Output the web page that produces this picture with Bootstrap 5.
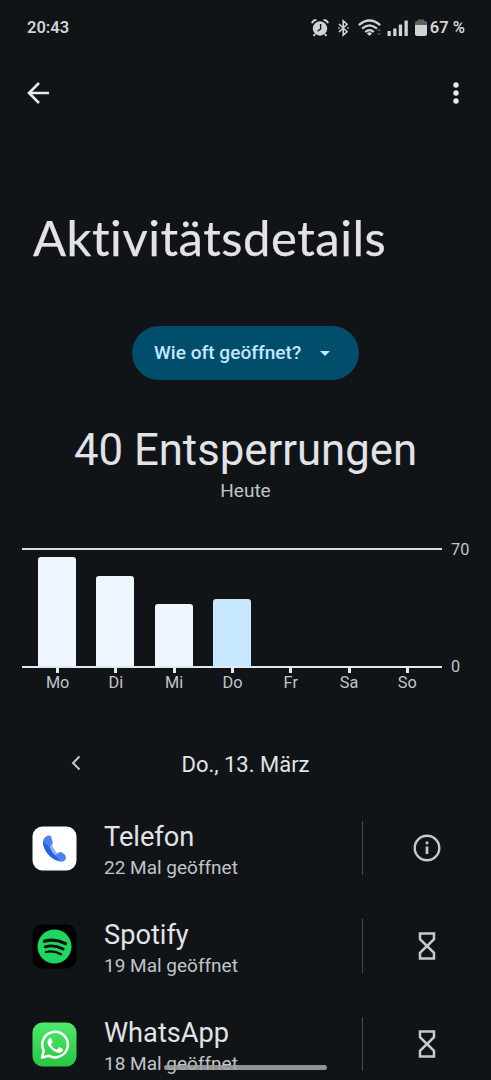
<!DOCTYPE html>
<html lang="de" data-bs-theme="dark">
<head>
<meta charset="utf-8">
<meta name="viewport" content="width=device-width, initial-scale=1">
<title>Aktivitätsdetails</title>
<link href="https://cdn.jsdelivr.net/npm/bootstrap@5.3.0/dist/css/bootstrap.min.css" rel="stylesheet">
<style>
html,body{height:1080px;overflow:hidden}
body{background:#101416;color:#e1e3e8;font-family:Roboto,"Liberation Sans",sans-serif}
svg{display:block;flex:none}
.status{height:55px;padding:1px 26px 0 27px;font-size:16.5px;font-weight:600;color:#d0d3d5}
.toolbar{height:76px;padding:0 22px 0 22px}
.icon-btn{width:32px;height:32px;padding:0;border:0;display:grid;place-items:center}
.page-title{font-family:Lato,Roboto,sans-serif;font-size:49px;line-height:60px;padding:76px 0 0 33px;margin:0;height:195px;font-weight:400;color:#e1e3e8;white-space:nowrap;font-variant-ligatures:none;-webkit-text-stroke:.25px #e1e3e8;letter-spacing:.53px}
.pill{width:227px;height:54px;padding:1px 29px 0 22px;background:#004d6c!important;color:#c3e8ff!important;border:0;font-size:19.1px;font-weight:500}
.pill::after{display:none!important}
.total{font-size:43.7px;line-height:52px;margin:44px 0 0;font-weight:400;white-space:nowrap;color:#e1e3e8}
.muted{color:#c1c5ca}
.today{font-size:19px;line-height:24px;margin-top:3px}
.chart{margin:45px 0 0 22px;height:150px}
.plot{width:420px}
.bars{height:120px;border-top:2px solid #d8dcde;border-bottom:2px solid #e4e8ea;padding:0 6px}
.bars>div,.days>div{flex:1 1 0}
.bar{width:38px;border-radius:3px 3px 0 0;background:#eef6ff}
.bar.today-bar{background:#c6e7ff}
.days{padding:0 5.5px 0 6.5px;font-size:16.3px;line-height:19px}
.tick{width:3px;height:5px;background:#e4e8ea;margin:0 auto}
.scale{padding-left:9px;height:120px;font-size:16.3px;line-height:16px}
.scale span:first-child{margin-top:-6px}
.scale span:last-child{margin-bottom:-7px}
.date-row{height:50px;margin-top:41px;font-size:22px}
.date-row .icon-btn{left:60px;top:8px}
.app{height:98.2px;padding-left:32px}
.apps{margin-top:10px}
.app-text{margin-left:27px;width:258px;padding-top:5px}
.app-name{font-size:27.2px;line-height:32px;white-space:nowrap}
.app-count{font-size:19px;line-height:24px;margin-top:3px}
.divider{width:1px;height:54px;background:#454a4e;margin-right:48px}
.handle{left:164px;top:1065px;width:163px;height:5px;background:#a3a3a3;opacity:.88}
</style>
</head>
<body>
<header class="status d-flex align-items-center justify-content-between">
  <span>20:43</span>
  <div class="d-flex align-items-center">
    <svg width="18" height="20" viewBox="0 0 18 20" fill="none" stroke="#d0d3d5"><circle cx="9" cy="10.5" r="7.2" fill="#d0d3d5" stroke="none"/><path d="M1 5.2Q2 2 5.4 2M17 5.2Q16 2 12.6 2M4 16l-1.4 2M14 16l1.4 2" stroke-width="2"/><path d="M9.6 6v5l-3 2.2" stroke="#101416" stroke-width="1.4"/></svg>
    <svg class="ms-2" width="13" height="20" viewBox="0 0 13 20" fill="none" stroke="#d0d3d5" stroke-width="1.6"><path d="M2 6l8 7.8L6.2 17.2V2.8L10 6.2 2 14"/><path d="M1.2 10h1.400M10.2 10h1.600"/></svg>
    <svg style="margin-left:8px" width="24" height="20" viewBox="0 0 24 20" fill="none" stroke="#d0d3d5" stroke-width="2.2"><path d="M.8 7.200Q11.500-2.200 22.200 7.200M4 10.600q7.500-6.500 15 0M7.200 14q4.300-3.700 8.600 0"/><path d="M8.800 15.200q2.700-2 5.400 0L11.500 18z" fill="#d0d3d5" stroke="none"/><path d="M19 13l2-2.500 2 2.500zM19 15l2 2.500 2-2.500z" fill="#484c4e" stroke="none"/></svg>
    <svg style="margin-left:5px" width="22" height="20" viewBox="0 0 22 20" fill="#d0d3d5"><rect x=".5" y="13" width="3.300" height="5" rx=".6"/><rect x="6.200" y="10.500" width="3.300" height="7.500" rx=".6"/><rect x="11.800" y="6.500" width="3.300" height="11.500" rx=".6"/><rect x="17.500" y="2.500" width="3.300" height="15.500" rx=".6"/></svg>
    <svg style="margin-left:6px;margin-right:3px" width="12" height="20" viewBox="0 0 12 20"><path d="M3 1.500h6V3h1.500Q12 3 12 4.500V7H0V4.500Q0 3 1.500 3H3z" fill="#5d6163"/><path d="M0 7h12v9q0 2-2 2H2q-2 0-2-2z" fill="#d0d3d5"/></svg>
    <span>67 %</span>
  </div>
</header>
<nav class="toolbar d-flex align-items-center justify-content-between">
  <button class="btn icon-btn" aria-label="Zurück"><svg width="24" height="24" viewBox="0 0 24 24" fill="none" stroke="#e8ebee" stroke-width="2.600"><path d="M23 12H3M13 2L3 12l10 10"/></svg></button>
  <button class="btn icon-btn" style="margin-right:-2.5px" aria-label="Mehr"><svg width="8" height="24" viewBox="0 0 8 24" fill="#e8ebee"><circle cx="4" cy="4" r="2.700"/><circle cx="4" cy="12" r="2.700"/><circle cx="4" cy="20" r="2.700"/></svg></button>
</nav>
<h1 class="page-title">Aktivitätsdetails</h1>
<main>
  <button class="btn pill rounded-pill d-flex align-items-center justify-content-between mx-auto"><span>Wie oft geöffnet?</span><svg width="10" height="5" viewBox="0 0 10 5"><path d="M0 0h10L5 5z" fill="#c3e8ff"/></svg></button>
  <h2 class="total text-center">40 Entsperrungen</h2>
  <div class="today muted text-center">Heute</div>
  <section class="chart d-flex">
    <div class="plot">
      <div class="bars d-flex align-items-end">
        <div><div class="bar mx-auto" style="height:109px"></div></div>
        <div><div class="bar mx-auto" style="height:90px"></div></div>
        <div><div class="bar mx-auto" style="height:62px"></div></div>
        <div><div class="bar today-bar mx-auto" style="height:67px"></div></div>
        <div></div><div></div><div></div>
      </div>
      <div class="days d-flex text-center muted">
        <div><div class="tick"></div>Mo</div><div><div class="tick"></div>Di</div><div><div class="tick"></div>Mi</div><div><div class="tick"></div>Do</div><div><div class="tick"></div>Fr</div><div><div class="tick"></div>Sa</div><div><div class="tick"></div>So</div>
      </div>
    </div>
    <div class="scale muted d-flex flex-column justify-content-between"><span>70</span><span>0</span></div>
  </section>
  <div class="date-row position-relative d-flex align-items-center justify-content-center">
    <button class="btn icon-btn position-absolute" aria-label="Vorheriger Tag"><svg width="10" height="16" viewBox="0 0 10 16" fill="none" stroke="#c7cbcf" stroke-width="1.900"><path d="M8.500 1.500L2 8l6.500 6.500"/></svg></button>
    <span>Do., 13. März</span>
  </div>
  <section class="apps">
    <div class="app d-flex align-items-center">
      <svg width="45" height="45" viewBox="0 0 45 45"><rect x=".5" y=".5" width="44" height="44" rx="10" fill="#fff"/><path d="M16 10c-4 1-6 5-4.500 10 2 7 8 14 17 15.500 3 .4 5-1 5.300-3.500L27.500 29c-4-2-7.500-6-8-10z" fill="#2563d8"/><path d="M13.500 11.200C16 9 18.500 9 19.300 11.600l1.300 4.200c.4 1.500-.2 2.600-3 4.700L12 17c-.4-2 .1-4.300 1.500-5.800z" fill="#4d82ee"/><path d="M23.500 29.500l3-2.700c1.200-1 2.300-1 3.500-.2l2.700 1.900c1.500 1.200 1.300 3 .2 4.700-1 1.500-2.700 2.300-4.500 2.200z" fill="#4d82ee"/><path d="M17.600 20.500l2.400-2c1 3.500 2.900 6.300 5.700 9l-2.200 2c-2.800-2.300-4.900-5.400-5.900-9z" fill="#91b5fb"/></svg>
      <div class="app-text"><div class="app-name">Telefon</div><div class="app-count muted">22 Mal geöffnet</div></div>
      <div class="divider"></div>
      <svg width="32" height="32" viewBox="0 0 32 32" fill="none" stroke="#c6c9cd" stroke-width="2.400"><circle cx="16" cy="16" r="12.300"/><path d="M16 14.500V22M16 9.500v2.700" stroke-width="2.700"/></svg>
    </div>
    <div class="app d-flex align-items-center">
      <svg width="45" height="45" viewBox="0 0 45 45"><rect x=".5" y=".5" width="44" height="44" rx="10" fill="#000"/><circle cx="22.500" cy="22.500" r="17" fill="#1ed760"/><g fill="none" stroke="#061008" stroke-linecap="round"><path d="M12.500 17.200q10.500-2.900 21 2.400" stroke-width="3.300"/><path d="M13.200 22.800q9-2.500 18 2.300" stroke-width="2.800"/><path d="M14 28q7.700-1.900 15 2.200" stroke-width="2.300"/></g></svg>
      <div class="app-text"><div class="app-name">Spotify</div><div class="app-count muted">19 Mal geöffnet</div></div>
      <div class="divider"></div>
      <svg width="32" height="32" viewBox="0 0 32 32" fill="none" stroke="#c6c9cd" stroke-width="2.500"><path d="M9 3.500h14v5.700L16 16l7 6.800v5.700H9v-5.700L16 16 9 9.200z"/></svg>
    </div>
    <div class="app d-flex align-items-center">
      <svg width="45" height="45" viewBox="0 0 45 45"><defs><linearGradient id="wa" x1="0" y1="0" x2="0" y2="1"><stop stop-color="#4fe86b"/><stop offset="1" stop-color="#27c644"/></linearGradient></defs><rect x=".5" y=".5" width="44" height="44" rx="10" fill="url(#wa)"/><path d="M10 35.500l1.800-6.800A12.800 12.800 0 1 1 16.700 33.700z" fill="none" stroke="#fff" stroke-width="2.500" stroke-linejoin="round"/><path d="M18.300 16c.6 0 .8.100 1.100.8l1.100 2.700c.2.600 0 1-1.300 2.500-.2.300-.2.500 0 .9 1.300 2.100 2.900 3.500 5.200 4.500.4.200.7.100.9-.2l1.400-1.700c.3-.4.600-.4 1-.2l2.800 1.400c.5.300.7.400.6 1.100-.2 2-1.900 3-3.700 3.100-1.500.1-4.700-.9-7.400-3.400-2.600-2.400-4.300-4.800-4.500-7.100-.1-1.700.8-3.200 1.700-4 .3-.3.700-.4 1.100-.4z" fill="#fff"/></svg>
      <div class="app-text"><div class="app-name">WhatsApp</div><div class="app-count muted">18 Mal geöffnet</div></div>
      <div class="divider"></div>
      <svg width="32" height="32" viewBox="0 0 32 32" fill="none" stroke="#c6c9cd" stroke-width="2.500"><path d="M9 3.500h14v5.700L16 16l7 6.800v5.700H9v-5.700L16 16 9 9.200z"/></svg>
    </div>
  </section>
</main>
<div class="handle position-absolute rounded-pill"></div>
<script src="https://cdn.jsdelivr.net/npm/bootstrap@5.3.0/dist/js/bootstrap.bundle.min.js"></script>
</body>
</html>
